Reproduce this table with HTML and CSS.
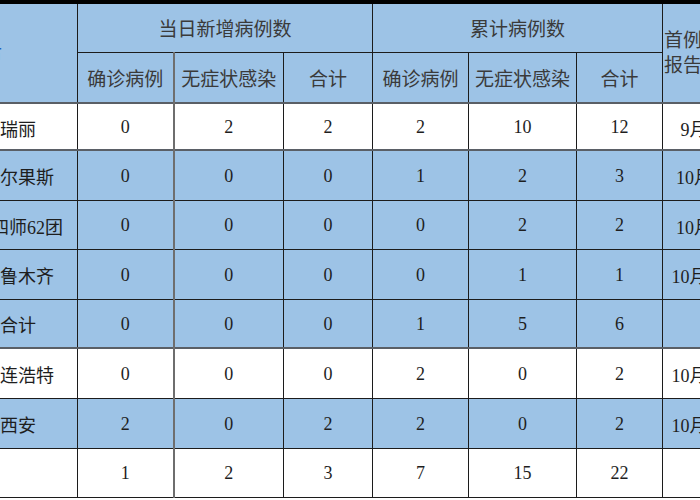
FILE: index.html
```html
<!DOCTYPE html>
<html lang="zh">
<head>
<meta charset="utf-8">
<link rel="stylesheet" href="styles.css">
</head>
<body>
<div class="topbar"></div>
<table class="grid">
  <colgroup>
    <col class="c1"><col class="c2"><col class="c3"><col class="c4"><col class="c5"><col class="c6"><col class="c7"><col class="c8">
  </colgroup>
  <thead>
    <tr class="h1">
      <th rowspan="2" class="city"><span class="link">城市</span></th>
      <th colspan="3">当日新增病例数</th>
      <th colspan="3">累计病例数</th>
      <th rowspan="2" class="first">首例病例<br>报告日期</th>
    </tr>
    <tr class="h2">
      <th>确诊病例</th><th class="gl">无症状感染</th><th>合计</th>
      <th>确诊病例</th><th>无症状感染</th><th>合计</th>
    </tr>
  </thead>
  <tbody>
    <tr class="r w hl"><td>瑞丽</td><td>0</td><td class="gl">2</td><td>2</td><td>2</td><td>10</td><td>12</td><td>9月5日</td></tr>
    <tr class="r b hl"><td>霍尔果斯</td><td>0</td><td class="gl">0</td><td>0</td><td>1</td><td>2</td><td>3</td><td>10月3日</td></tr>
    <tr class="r b"><td>第四师62团</td><td>0</td><td class="gl">0</td><td>0</td><td>0</td><td>2</td><td>2</td><td>10月3日</td></tr>
    <tr class="r b"><td>乌鲁木齐</td><td>0</td><td class="gl">0</td><td>0</td><td>0</td><td>1</td><td>1</td><td>10月16日</td></tr>
    <tr class="r b"><td>合计</td><td>0</td><td class="gl">0</td><td>0</td><td>1</td><td>5</td><td>6</td><td></td></tr>
    <tr class="r w hl"><td>二连浩特</td><td>0</td><td class="gl">0</td><td>0</td><td>2</td><td>0</td><td>2</td><td>10月18日</td></tr>
    <tr class="r b"><td>西安</td><td>2</td><td class="gl">0</td><td>2</td><td>2</td><td>0</td><td>2</td><td>10月17日</td></tr>
    <tr class="r w"><td></td><td>1</td><td class="gl">2</td><td>3</td><td>7</td><td>15</td><td>22</td><td></td></tr>
  </tbody>
</table>
</body>
</html>
```

FILE: styles.css
```css
html, body {
  margin: 0;
  padding: 0;
  background: #ffffff;
  overflow: hidden;
}

body {
  width: 700px;
  height: 500px;
  font-family: "Liberation Serif", "Noto Sans CJK SC", serif;
}

.topbar {
  height: 4px;
  background: #000000;
}

.grid {
  border-collapse: collapse;
  table-layout: fixed;
  width: 794px;
  margin-left: -42px;
}

.c1 { width: 119px; }
.c2 { width: 96px; }
.c3 { width: 110px; }
.c4 { width: 89px; }
.c5 { width: 96px; }
.c6 { width: 108px; }
.c7 { width: 86px; }
.c8 { width: 90px; }

.grid th,
.grid td {
  border: 1px solid #1c1c1c;
  padding: 0;
  text-align: center;
  vertical-align: middle;
  white-space: nowrap;
  overflow: hidden;
}

.grid th {
  background: #9dc3e6;
  color: #3a3a3a;
  font-weight: normal;
  font-size: 19px;
}

.grid thead tr:first-child th {
  border-top: none;
}

.h1 { height: 48px; }
.h2 { height: 51px; }

.h2 th {
  border-top: 1px solid #555a60;
}

.city {
  text-align: right !important;
  padding-right: 75px !important;
}

.link {
  color: #1f5fbf;
}

.first {
  text-align: left !important;
  padding-left: 1px !important;
  line-height: 25px;
}

.grid td {
  color: #1e1e1e;
  font-size: 18px;
  padding-top: 2px;
}

.r { height: 49px; }
.grid tbody tr:nth-child(1) { height: 47px; }
.grid tbody tr:nth-child(2) { height: 50px; }
.grid tbody tr:nth-child(4) { height: 50px; }
.grid tbody tr:nth-child(6) { height: 50px; }
.grid tbody tr:nth-child(7) { height: 50px; }

.w td { background: #ffffff; }
.b td { background: #9dc3e6; }

.hl td {
  border-top: 2px solid #5a5f66;
}

.grid .gl {
  border-left: 2px solid #6e6e6e;
}
```
